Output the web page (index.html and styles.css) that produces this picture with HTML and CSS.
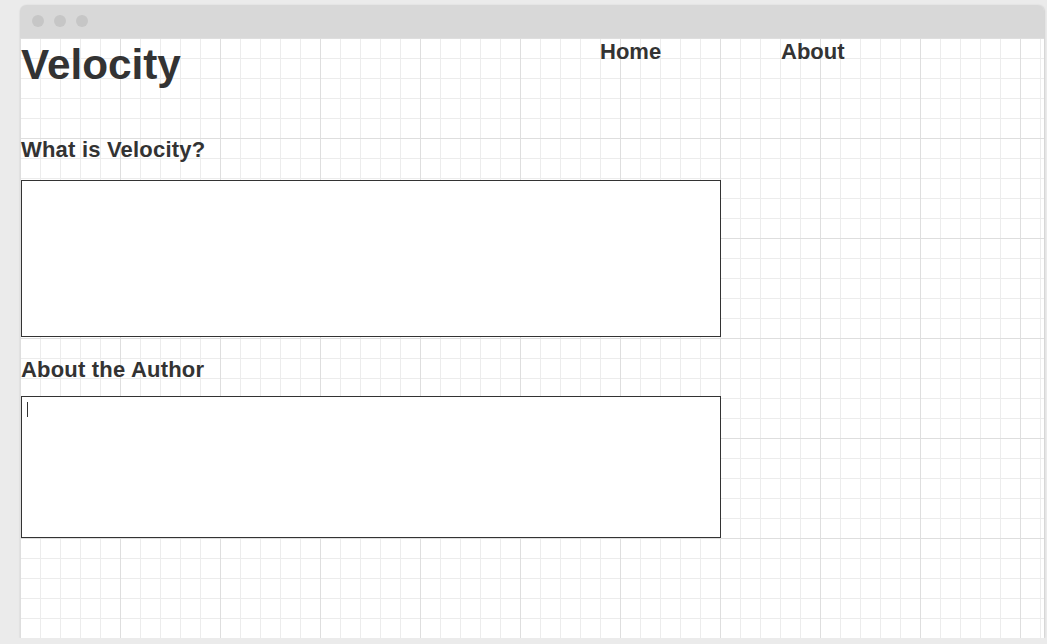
FILE: index.html
```html
<!DOCTYPE html>
<html>
<head>
<meta charset="utf-8">
<link rel="stylesheet" href="styles.css">
</head>
<body>
<div class="window">
  <div class="titlebar">
    <span class="dot"></span><span class="dot"></span><span class="dot"></span>
  </div>
  <div class="content">
    <header class="header">
      <h1 class="logo">Velocity</h1>
      <nav class="nav">
        <a class="nav-link home">Home</a>
        <a class="nav-link">About</a>
      </nav>
    </header>
    <h2 class="section-title">What is Velocity?</h2>
    <div class="box box-what"></div>
    <h2 class="section-title second">About the Author</h2>
    <div class="box box-author"><span class="caret"></span></div>
  </div>
</div>
</body>
</html>
```

FILE: styles.css
```css
html, body {
  margin: 0;
  padding: 0;
  background: #ebebeb;
  font-family: "Liberation Sans", Arial, sans-serif;
  color: #333;
}
.window {
  margin: 5px 0 0 20px;
  width: 1024px;
  height: 633px;
  display: flex;
  flex-direction: column;
  border-radius: 6px 6px 0 0;
  box-shadow: 0 1px 2px rgba(0,0,0,0.12), 1px 0 2px rgba(0,0,0,0.08);
  overflow: hidden;
}
.titlebar {
  height: 33px;
  background: #d8d8d8;
  display: flex;
  align-items: center;
  gap: 10px;
  padding-left: 12px;
  padding-bottom: 2px;
  box-sizing: border-box;
}
.dot {
  width: 12px;
  height: 12px;
  border-radius: 50%;
  background: #c6c6c6;
}
.content {
  flex: 1;
  padding: 0 1px;
  background-color: #fff;
  background-image:
    linear-gradient(to right, #dedede 1px, transparent 1px),
    linear-gradient(to bottom, #dedede 1px, transparent 1px),
    linear-gradient(to right, #ececec 1px, transparent 1px),
    linear-gradient(to bottom, #ececec 1px, transparent 1px);
  background-size: 100px 100px, 100px 100px, 20px 20px, 20px 20px;
  background-position: 0 0;
}
.header {
  display: flex;
  align-items: flex-start;
  height: 100px;
}
.logo {
  margin: 3px 0 0 0;
  font-size: 42.3px;
  line-height: 48px;
  font-weight: bold;
  width: 579px;
}
.nav {
  display: flex;
  padding-top: 2px;
}
.nav-link {
  font-size: 22px;
  line-height: 24px;
  font-weight: bold;
}
.home {
  width: 181px;
}
.section-title {
  margin: 0;
  font-size: 22px;
  line-height: 24px;
  font-weight: bold;
  letter-spacing: 0.2px;
}
.box {
  width: 700px;
  box-sizing: border-box;
  border: 1px solid #333;
  background: #fff;
  margin-top: 18px;
}
.box-what {
  height: 157px;
}
.second {
  margin-top: 21px;
}
.box-author {
  margin-top: 14px;
  height: 142px;
  padding: 5px;
}
.caret {
  display: block;
  width: 1px;
  height: 15px;
  background: #333;
}
```
